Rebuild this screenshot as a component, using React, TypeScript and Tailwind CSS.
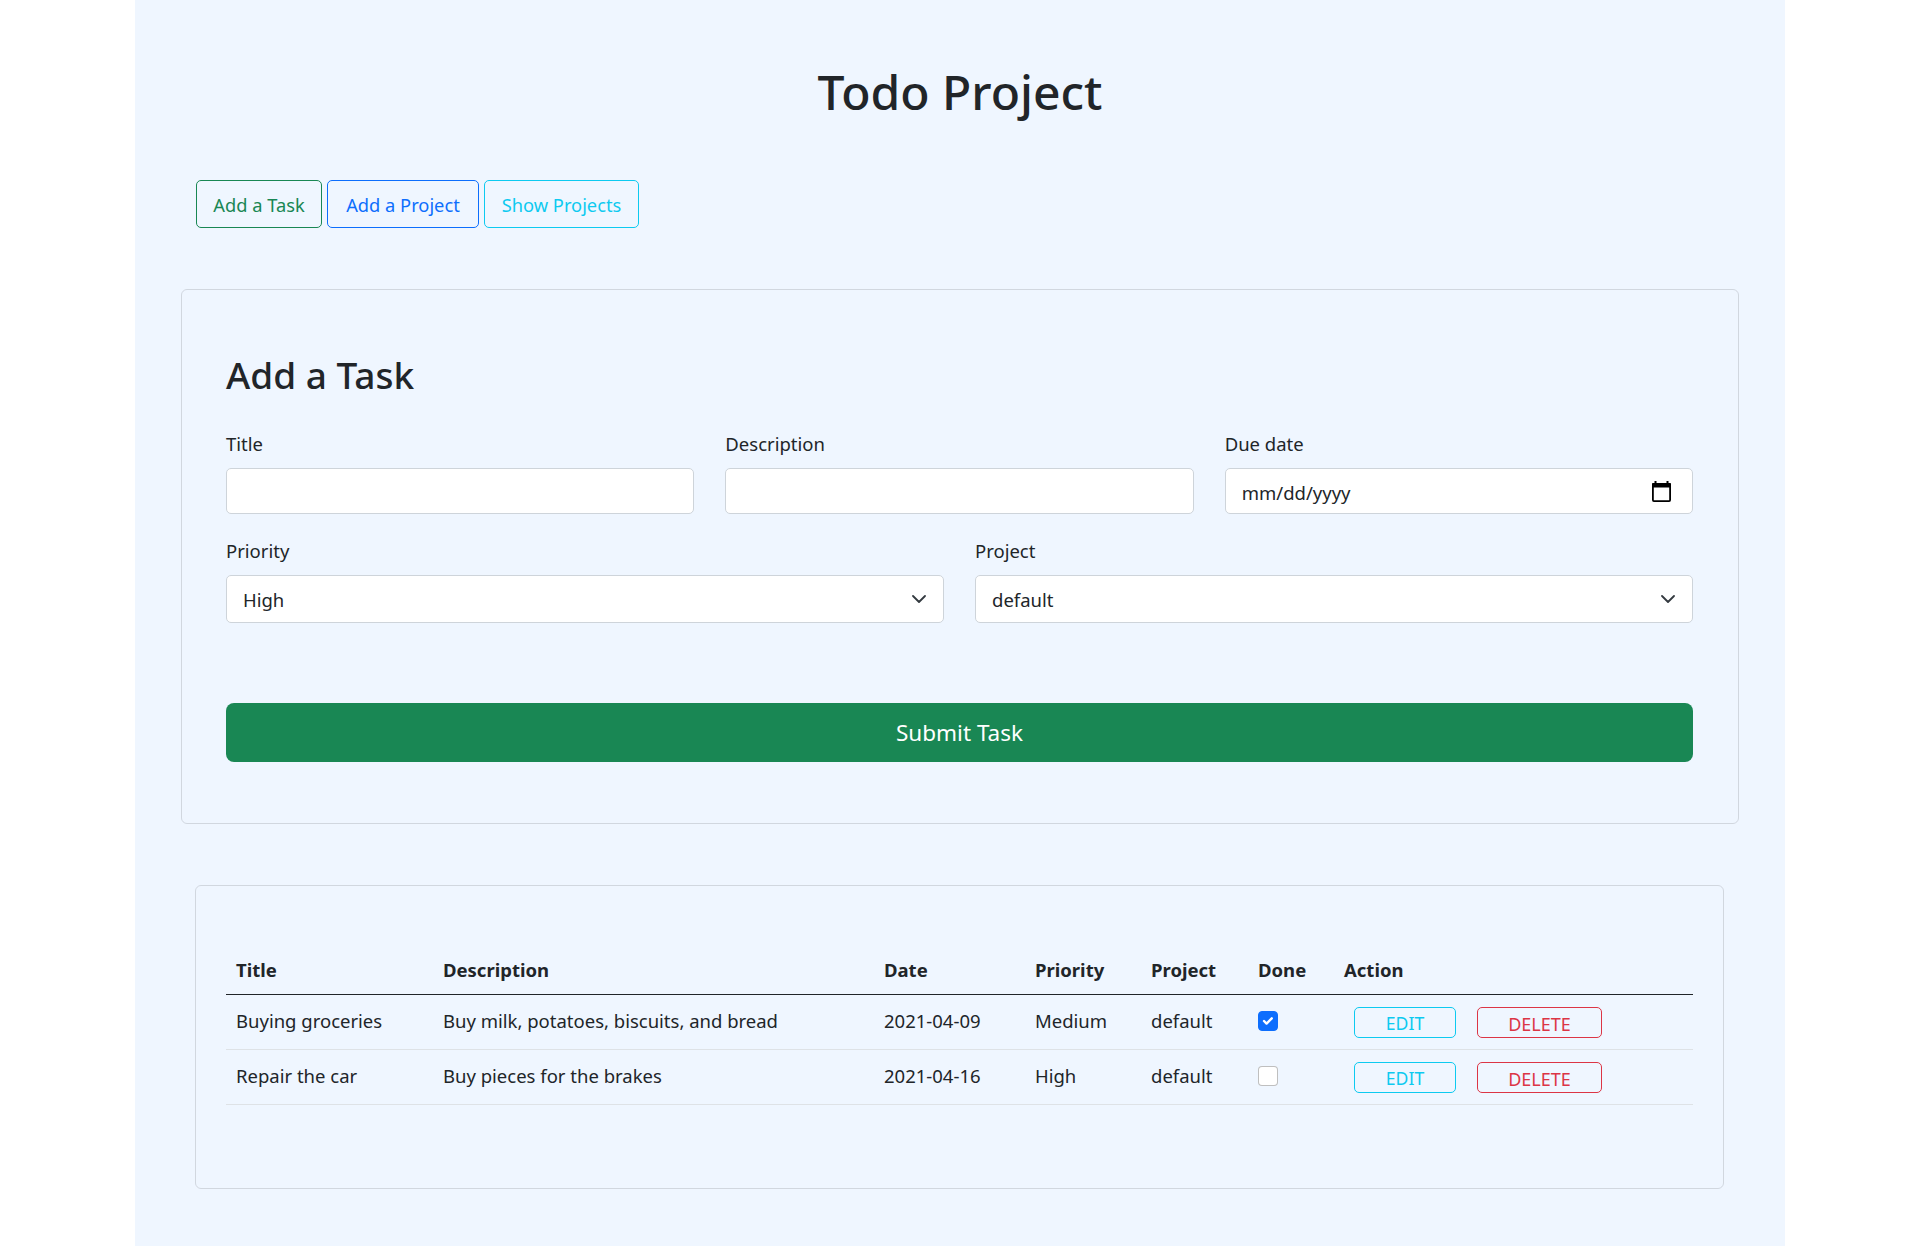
import React from "react";

function Chevron() {
  return (
    <svg width="14" height="8" viewBox="0 0 14 8" fill="none" aria-hidden="true">
      <polyline points="1,1 7,7 13,1" stroke="#343a40" strokeWidth="1.8" strokeLinecap="round" strokeLinejoin="round" />
    </svg>
  );
}

function CalendarIcon() {
  return (
    <svg width="19" height="21" viewBox="0 0 19 21" aria-hidden="true">
      <rect x="2.5" y="0" width="2" height="3" fill="#000" />
      <rect x="14.5" y="0" width="2" height="3" fill="#000" />
      <rect x="0.9" y="2.9" width="17.2" height="17.2" rx="1" fill="none" stroke="#000" strokeWidth="1.8" />
      <rect x="0" y="2" width="19" height="4.5" rx="1" fill="#000" />
    </svg>
  );
}

function Field({ label, children }: { label: string; children: React.ReactNode }) {
  return (
    <div className="flex flex-col">
      <label className="text-[18.5px] leading-[28px]">{label}</label>
      <div className="mt-[10px]">{children}</div>
    </div>
  );
}

function Select({ value }: { value: string }) {
  return (
    <div className="relative">
      <select
        defaultValue={value}
        className="h-[48px] w-full appearance-none rounded-[5px] border border-[#ced4da] bg-white pl-[16px] pr-[40px] pt-[2px] text-[18.5px] text-[#212529] outline-none"
      >
        <option>{value}</option>
      </select>
      <span className="pointer-events-none absolute right-[18px] top-[20px] flex">
        <Chevron />
      </span>
    </div>
  );
}

function Check({ checked }: { checked: boolean }) {
  return checked ? (
    <span className="flex h-[20px] w-[20px] items-center justify-center rounded-[4px] border border-[#0d6efd] bg-[#0d6efd]">
      <svg width="16" height="16" viewBox="0 0 20 20" aria-hidden="true">
        <path d="m5 10 3.2 3.2 6.5-6.5" fill="none" stroke="#fff" strokeWidth="3" strokeLinecap="round" strokeLinejoin="round" />
      </svg>
    </span>
  ) : (
    <span className="block h-[20px] w-[20px] rounded-[4px] border border-[rgba(0,0,0,0.25)] bg-white" />
  );
}

const tasks = [
  { title: "Buying groceries", desc: "Buy milk, potatoes, biscuits, and bread", date: "2021-04-09", priority: "Medium", project: "default", done: true },
  { title: "Repair the car", desc: "Buy pieces for the brakes", date: "2021-04-16", priority: "High", project: "default", done: false },
];

export default function App() {
  return (
    <div className="min-h-[1246px] bg-white font-['Noto_Sans',sans-serif] text-[#212529]">
      <div className="mx-auto flex min-h-[1246px] w-[1650px] flex-col bg-[#eff6ff]">
        <h1 className="mt-[62px] text-center text-[48px] font-medium leading-[60px]">Todo Project</h1>

        <div className="ml-[61px] mt-[58px] flex gap-[5px]">
          <button className="h-[48px] w-[126px] rounded-[5px] border border-[#198754] pt-[1px] text-[18.3px] text-[#198754]">Add a Task</button>
          <button className="h-[48px] w-[152px] rounded-[5px] border border-[#0d6efd] pt-[1px] text-[18.3px] text-[#0d6efd]">Add a Project</button>
          <button className="h-[48px] w-[155px] rounded-[5px] border border-[#0dcaf0] pt-[1px] text-[18.3px] text-[#0dcaf0]">Show Projects</button>
        </div>

        <div className="ml-[46px] mt-[61px] w-[1558px] rounded-[6px] border border-[rgba(0,0,0,0.125)] pb-[61px] pl-[44px] pr-[45px] pt-[62px]">
          <h2 className="text-[37px] font-medium leading-[46px]">Add a Task</h2>

          <div className="mt-[32px] grid grid-cols-3 gap-x-[31px]">
            <Field label="Title">
              <input className="h-[46px] w-full rounded-[5px] border border-[#ced4da] bg-white px-[16px] text-[18.5px] outline-none" />
            </Field>
            <Field label="Description">
              <input className="h-[46px] w-full rounded-[5px] border border-[#ced4da] bg-white px-[16px] text-[18.5px] outline-none" />
            </Field>
            <Field label="Due date">
              <div className="flex h-[46px] w-full items-center justify-between rounded-[5px] border border-[#ced4da] bg-white pl-[16px] pr-[21px] text-[18.5px]">
                <span className="pt-[3px]">mm/dd/yyyy</span>
                <CalendarIcon />
              </div>
            </Field>
          </div>

          <div className="mt-[23px] grid grid-cols-2 gap-x-[31px]">
            <Field label="Priority">
              <Select value="High" />
            </Field>
            <Field label="Project">
              <Select value="default" />
            </Field>
          </div>

          <button className="mt-[80px] h-[59px] w-full rounded-[8px] bg-[#198754] pt-[1px] text-[22.5px] text-white">Submit Task</button>
        </div>

        <div className="ml-[60px] mt-[61px] w-[1529px] rounded-[6px] border border-[rgba(0,0,0,0.125)] px-[30px] pb-[83px] pt-[61px]">
          <table className="w-full table-fixed border-collapse text-[18.5px]">
            <colgroup>
              <col className="w-[208px]" />
              <col className="w-[442px]" />
              <col className="w-[151px]" />
              <col className="w-[116px]" />
              <col className="w-[107px]" />
              <col className="w-[85px]" />
              <col className="w-[358px]" />
            </colgroup>
            <thead>
              <tr className="h-[47px] border-b border-[#212529]">
                <th className="pl-[10px] text-left align-middle font-bold">Title</th>
                <th className="pl-[9px] text-left align-middle font-bold">Description</th>
                <th className="pl-[8px] text-left align-middle font-bold">Date</th>
                <th className="pl-[8px] text-left align-middle font-bold">Priority</th>
                <th className="pl-[8px] text-left align-middle font-bold">Project</th>
                <th className="pl-[8px] text-left align-middle font-bold">Done</th>
                <th className="pl-[9px] text-left align-middle font-bold">Action</th>
              </tr>
            </thead>
            <tbody>
              {tasks.map((t) => (
                <tr key={t.title} className="h-[55px] border-b border-[#dee2e6]">
                  <td className="pb-[2px] pl-[10px] align-middle">{t.title}</td>
                  <td className="pb-[2px] pl-[9px] align-middle">{t.desc}</td>
                  <td className="pb-[2px] pl-[8px] align-middle">{t.date}</td>
                  <td className="pb-[2px] pl-[8px] align-middle">{t.priority}</td>
                  <td className="pb-[2px] pl-[8px] align-middle">{t.project}</td>
                  <td className="pb-[2px] pl-[8px] align-middle">
                    <Check checked={t.done} />
                  </td>
                  <td className="pl-[19px] align-middle">
                    <div className="flex gap-[21px] pt-[2px]">
                      <button className="h-[31px] w-[102px] rounded-[5px] border border-[#0dcaf0] pt-[3px] text-[17.6px] leading-none text-[#0dcaf0]">EDIT</button>
                      <button className="h-[31px] w-[125px] rounded-[5px] border border-[#dc3545] pt-[3px] text-[18px] leading-none text-[#dc3545]">DELETE</button>
                    </div>
                  </td>
                </tr>
              ))}
            </tbody>
          </table>
        </div>
      </div>
    </div>
  );
}
